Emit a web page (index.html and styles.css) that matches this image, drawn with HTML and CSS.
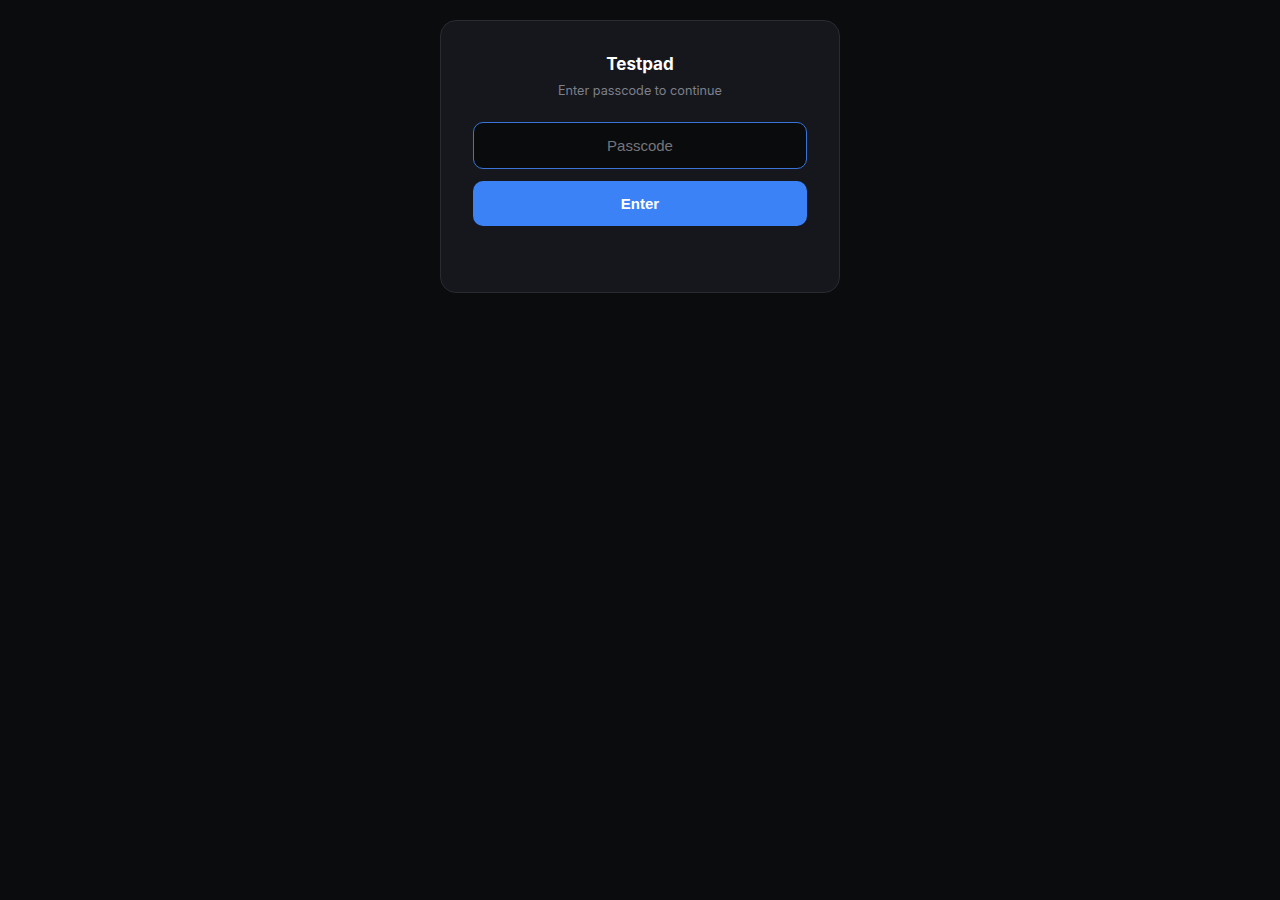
FILE: index.html
```html
<!DOCTYPE html>
<html lang="en">
<head>
  <meta charset="UTF-8">
  <title>Testpad</title>
  <meta name="viewport" content="width=device-width, initial-scale=1.0">
  <link rel="stylesheet" href="styles.css">
</head>
<body>
  <div class="gate">
    <h1>Testpad</h1>
    <p class="hint">Enter passcode to continue</p>
    <form class="gate-form" onsubmit="return false">
      <input type="password" class="pass-input" placeholder="Passcode">
      <button type="submit" class="enter-btn">Enter</button>
      <div class="error"></div>
    </form>
  </div>
</body>
</html>
```

FILE: styles.css
```css
* { box-sizing: border-box; }

body {
  margin: 0;
  background-color: #0b0c0e;
  color: white;
  font-family: Inter, 'Noto Sans', sans-serif;
  min-height: 100vh;
}

.gate {
  width: 400px;
  margin: 20px auto 0;
  padding: 32px 32px 32px;
  background-color: #16171c;
  border: 1px solid #2a2b31;
  border-radius: 16px;
  text-align: center;
}

.gate h1 {
  margin: 0;
  font-size: 17px;
  line-height: 22px;
  font-weight: 700;
  color: #fff;
}

.hint {
  margin: 7px 0 0;
  font-size: 12.7px;
  line-height: 18px;
  color: #7d808a;
}

.gate-form {
  display: flex;
  flex-direction: column;
  gap: 12px;
  margin-top: 22px;
}

.pass-input {
  width: 100%;
  height: 47px;
  padding: 0 14px;
  background-color: #0a0b0d;
  border: 1px solid #3a74d8;
  border-radius: 10px;
  color: white;
  font-family: 'Liberation Sans', Arial, sans-serif;
  font-size: 15px;
  text-align: center;
  outline: none;
}

.pass-input::placeholder {
  color: #75767a;
}

.enter-btn {
  height: 45px;
  background-color: #3b82f6;
  border: none;
  border-radius: 10px;
  color: white;
  font-family: 'Liberation Sans', Arial, sans-serif;
  font-size: 15px;
  font-weight: 700;
  cursor: pointer;
}

.error {
  min-height: 22px;
}
```
